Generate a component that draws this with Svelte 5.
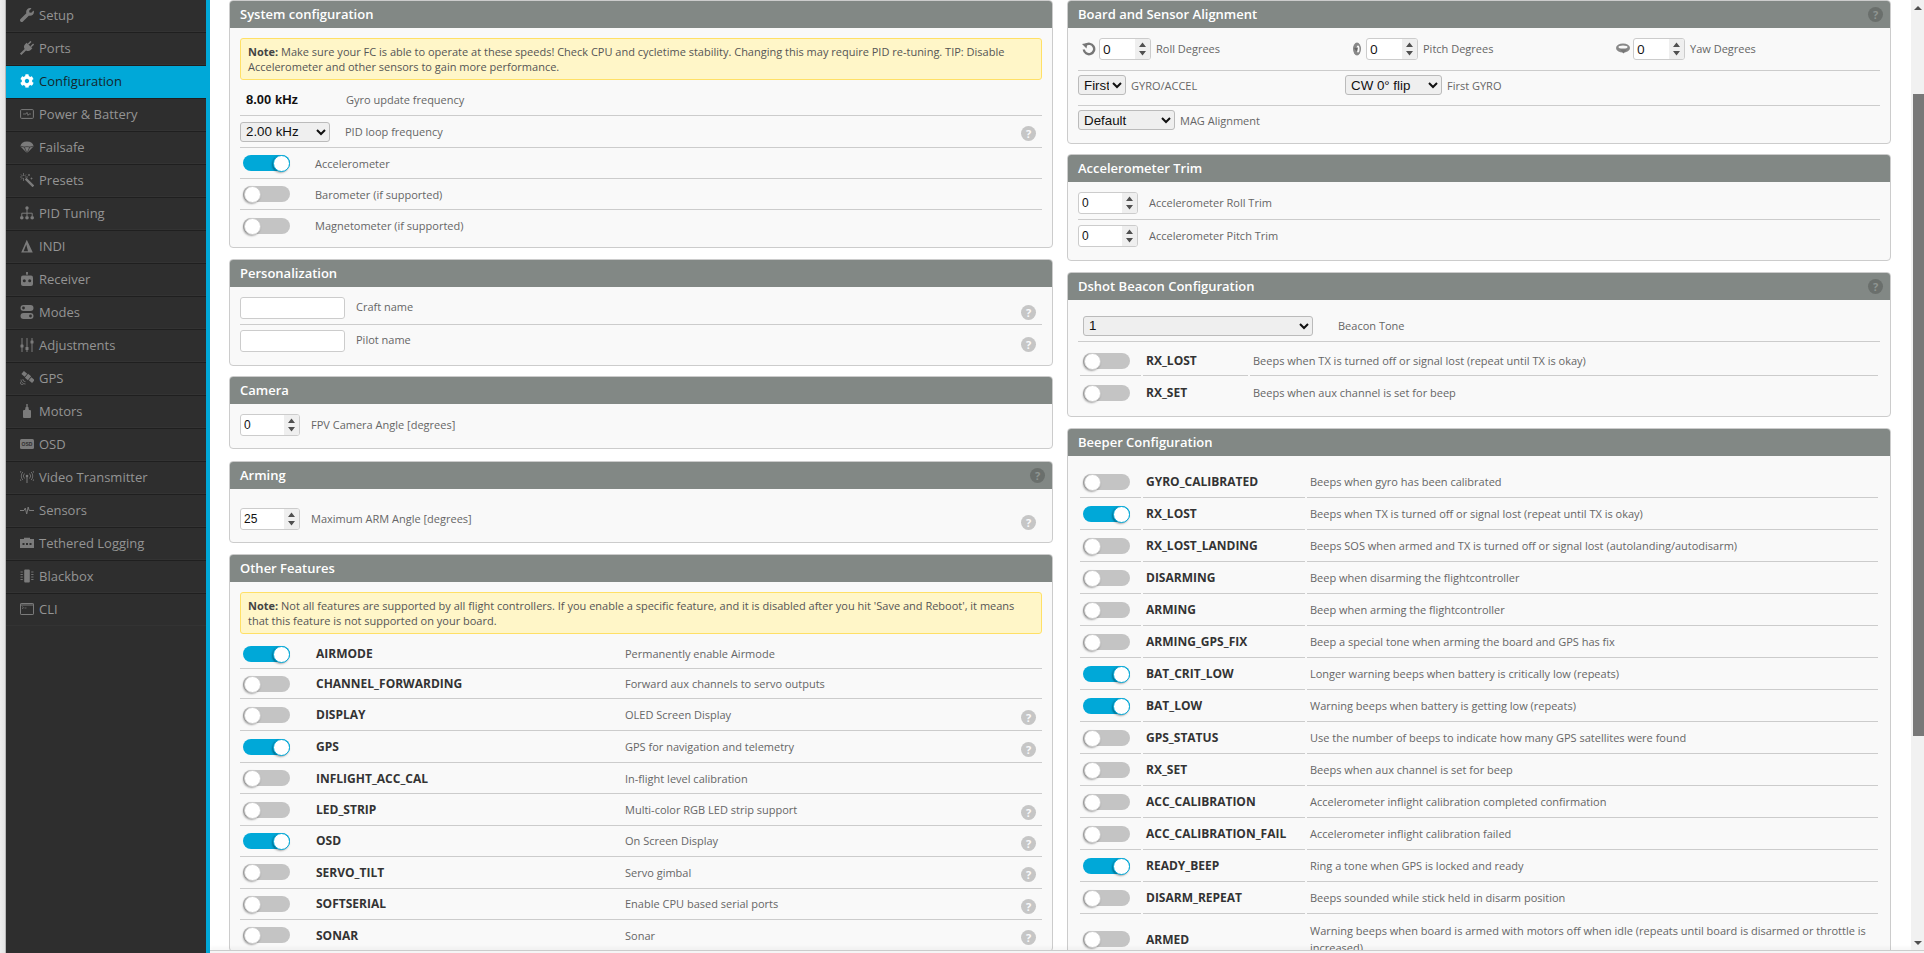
<script>
  const wrench = 'M507.73 109.1c-2.24-9.03-13.54-12.09-20.12-5.51l-74.36 74.36-67.88-11.31-11.31-67.88 74.36-74.36c6.62-6.62 3.43-17.9-5.66-20.16-47.38-11.74-99.55.91-136.58 37.93-39.64 39.64-50.55 97.1-34.05 147.2L18.74 402.76c-24.99 24.99-24.99 65.51 0 90.5 24.99 24.99 65.51 24.99 90.5 0l213.21-213.21c50.12 16.71 107.47 5.68 147.37-34.22 37.07-37.07 49.7-89.32 37.91-136.73z';
  const cog = 'M487.4 315.7l-42.6-24.6c4.3-23.2 4.3-47 0-70.2l42.6-24.6c4.9-2.8 7.1-8.6 5.5-14-11.1-35.6-30-67.8-54.7-94.6-3.8-4.1-10-5.1-14.8-2.3L380.8 110c-17.9-15.4-38.5-27.3-60.8-35.1V25.8c0-5.6-3.9-10.5-9.4-11.7-36.7-8.2-74.3-7.8-109.2 0-5.5 1.2-9.4 6.1-9.4 11.7V75c-22.2 7.9-42.8 19.8-60.8 35.1L88.7 85.5c-4.9-2.8-11-1.9-14.8 2.3-24.7 26.7-43.6 58.9-54.7 94.6-1.7 5.4.6 11.2 5.5 14L67.3 221c-4.3 23.2-4.3 47 0 70.2l-42.6 24.6c-4.9 2.8-7.1 8.6-5.5 14 11.1 35.6 30 67.8 54.7 94.6 3.8 4.1 10 5.1 14.8 2.3l42.6-24.6c17.9 15.4 38.5 27.3 60.8 35.1v49.2c0 5.6 3.9 10.5 9.4 11.7 36.7 8.2 74.3 7.8 109.2 0 5.5-1.2 9.4-6.1 9.4-11.7v-49.2c22.2-7.9 42.8-19.8 60.8-35.1l42.6 24.6c4.9 2.8 11 1.9 14.8-2.3 24.7-26.7 43.6-58.9 54.7-94.6 1.5-5.5-.7-11.3-5.6-14.1zM256 336c-44.1 0-80-35.9-80-80s35.9-80 80-80 80 35.9 80 80-35.9 80-80 80z';

  const nav = [
    { label: 'Setup', icon: `<g transform="scale(.0273)"><path d="${wrench}"/></g>` },
    { label: 'Ports', icon: `<g transform="rotate(45 7 7)"><rect x="4.4" y="-.5" width="1.5" height="4"/><rect x="8.1" y="-.5" width="1.5" height="4"/><path d="M3 3.5h8v2.2a4 4 0 0 1-3 3.7V16H6V9.4a4 4 0 0 1-3-3.7z"/></g>` },
    { label: 'Configuration', active: true, icon: `<g transform="scale(.0273)"><path d="${cog}"/></g>` },
    { label: 'Power & Battery', icon: `<rect x=".6" y="2.6" width="12.8" height="8.8" rx="1" fill="none" stroke="currentColor" stroke-width="1"/><path d="M3 7h3l1-1.6 1 3 1-1.4h2" fill="none" stroke="currentColor" stroke-width=".8"/>` },
    { label: 'Failsafe', icon: `<path d="M.3 6.2A6.8 5.8 0 0 1 13.700 6.2L7 13.2z"/><path d="M.3 6.2 4.200 7 7 13.2 9.800 7 13.700 6.2M4.200 7 7 6.600 9.800 7" fill="none" stroke="#2e2e2e" stroke-width=".7"/>` },
    { label: 'Presets', icon: `<path d="M5.600 5.600 13.400 13.400" stroke="currentColor" stroke-width="2.400"/><path d="M3.500 0v3M3.500 5v3M0 4h2.500M5 4h3M1 1.500l1.500 1.500M6 1.500 4.500 3M1 6.500 2.500 5M9 1v2M8 2h2M10.500 5.500h2M11.500 4.500v2" stroke="currentColor" stroke-width=".7" fill="none"/>` },
    { label: 'PID Tuning', icon: `<circle cx="7" cy="2" r="1.700"/><circle cx="1.800" cy="11.800" r="1.800"/><circle cx="7" cy="11.800" r="1.800"/><circle cx="12.200" cy="11.800" r="1.800"/><path d="M7 3v7M1.800 10V7.200h10.400V10" fill="none" stroke="currentColor" stroke-width="1"/>` },
    { label: 'INDI', icon: `<path fill-rule="evenodd" d="M6.800.8 12.800 13.600H1.200zM6.300 5.500 3.600 12.300h4.400z"/>` },
    { label: 'Receiver', icon: `<rect x="6.400" y="0" width="1.200" height="3"/><circle cx="7" cy="1" r="1"/><rect x="1" y="3.500" width="12" height="10.500" rx="2"/><circle cx="4.300" cy="8.700" r="1.500" fill="#2e2e2e"/><circle cx="9.700" cy="8.700" r="1.500" fill="#2e2e2e"/>` },
    { label: 'Modes', icon: `<path fill-rule="evenodd" d="M3.500 0h7a3 3 0 0 1 0 6h-7a3 3 0 0 1 0-6zM3.500 1.600a1.400 1.400 0 1 0 0 2.800 1.400 1.400 0 0 0 0-2.800zM3.500 8h7a3 3 0 0 1 0 6h-7a3 3 0 0 1 0-6zM10.500 9.600a1.400 1.400 0 1 0 0 2.800 1.400 1.400 0 0 0 0-2.800z"/>` },
    { label: 'Adjustments', icon: `<path d="M2 0v14M7 0v14M12 0v14" stroke="currentColor" stroke-width="1"/><rect x=".5" y="6.500" width="3" height="3" rx=".6"/><rect x="5.500" y="9" width="3" height="3" rx=".6"/><rect x="10.500" y="2.500" width="3" height="3" rx=".6"/>` },
    { label: 'GPS', icon: `<g transform="rotate(40 8 6)"><rect x="6" y="3.500" width="4" height="5"/><rect x="1" y="4" width="4.300" height="4"/><rect x="10.700" y="4" width="4.300" height="4"/></g><path d="M1 8.500a4.500 4.500 0 0 0 4.500 4.500M0 10.500a3.500 3.500 0 0 0 3.500 3.500M2.800 8a2.700 2.700 0 0 0 2.700 2.700" fill="none" stroke="currentColor" stroke-width=".8"/>` },
    { label: 'Motors', icon: `<rect x="6.300" y="0" width="1.400" height="3"/><path d="M5.600 3h2.800l.6 3.200H5z"/><rect x="3" y="6" width="8" height="8" rx="1"/>` },
    { label: 'OSD', icon: `<rect x="0" y="2" width="14" height="10" rx="1.500"/><text x="7" y="9" text-anchor="middle" font-size="5" font-weight="700" font-family="Liberation Sans, sans-serif" fill="#2e2e2e">OSD</text>` },
    { label: 'Video Transmitter', icon: `<circle cx="7" cy="6" r="1.300"/><path d="M7 6v7" stroke="currentColor" stroke-width="1"/><path d="M4.500 3.500a3.500 3.500 0 0 0 0 5M9.500 3.500a3.500 3.500 0 0 1 0 5M2.800 2a6 6 0 0 0 0 8M11.200 2a6 6 0 0 1 0 8M1 1a8 8 0 0 0 0 10M13 1a8 8 0 0 1 0 10" fill="none" stroke="currentColor" stroke-width=".8"/>` },
    { label: 'Sensors', icon: `<path d="M0 7.500h4l1.300-2.500 1.400 6 1.500-7 1 3.500h4.800" fill="none" stroke="currentColor" stroke-width="1"/>` },
    { label: 'Tethered Logging', icon: `<path fill-rule="evenodd" d="M0 3h4V1.800h6V3h4v9H0zM2.500 7v2h2V7zM6 7v2h2V7zM9.500 7v2h2V7z"/>` },
    { label: 'Blackbox', icon: `<rect x="4.200" y=".5" width="5.600" height="13" rx="1"/><path d="M.5 3h2.300M.5 5.500h2.300M.5 8h2.300M.5 10.500h2.300M11.200 3h2.300M11.200 5.500h2.300M11.200 8h2.300M11.200 10.500h2.300" stroke="currentColor" stroke-width=".9"/>` },
    { label: 'CLI', icon: `<rect x=".5" y="1.500" width="13" height="11" rx=".6" fill="none" stroke="currentColor" stroke-width="1"/><path d="M.5 3h13" stroke="currentColor" stroke-width="1"/><path d="M2 4.500 3.500 5.700 2 6.900M4.500 6h2" fill="none" stroke="currentColor" stroke-width=".7"/>` }
  ];

  const features = [
    { name: 'AIRMODE', desc: 'Permanently enable Airmode', on: true },
    { name: 'CHANNEL_FORWARDING', desc: 'Forward aux channels to servo outputs' },
    { name: 'DISPLAY', desc: 'OLED Screen Display', help: true },
    { name: 'GPS', desc: 'GPS for navigation and telemetry', on: true, help: true },
    { name: 'INFLIGHT_ACC_CAL', desc: 'In-flight level calibration' },
    { name: 'LED_STRIP', desc: 'Multi-color RGB LED strip support', help: true },
    { name: 'OSD', desc: 'On Screen Display', on: true, help: true },
    { name: 'SERVO_TILT', desc: 'Servo gimbal', help: true },
    { name: 'SOFTSERIAL', desc: 'Enable CPU based serial ports', help: true },
    { name: 'SONAR', desc: 'Sonar', help: true }
  ];

  const dshot = [
    { name: 'RX_LOST', desc: 'Beeps when TX is turned off or signal lost (repeat until TX is okay)' },
    { name: 'RX_SET', desc: 'Beeps when aux channel is set for beep' }
  ];

  const beeper = [
    { name: 'GYRO_CALIBRATED', desc: 'Beeps when gyro has been calibrated' },
    { name: 'RX_LOST', desc: 'Beeps when TX is turned off or signal lost (repeat until TX is okay)', on: true },
    { name: 'RX_LOST_LANDING', desc: 'Beeps SOS when armed and TX is turned off or signal lost (autolanding/autodisarm)' },
    { name: 'DISARMING', desc: 'Beep when disarming the flightcontroller' },
    { name: 'ARMING', desc: 'Beep when arming the flightcontroller' },
    { name: 'ARMING_GPS_FIX', desc: 'Beep a special tone when arming the board and GPS has fix' },
    { name: 'BAT_CRIT_LOW', desc: 'Longer warning beeps when battery is critically low (repeats)', on: true },
    { name: 'BAT_LOW', desc: 'Warning beeps when battery is getting low (repeats)', on: true },
    { name: 'GPS_STATUS', desc: 'Use the number of beeps to indicate how many GPS satellites were found' },
    { name: 'RX_SET', desc: 'Beeps when aux channel is set for beep' },
    { name: 'ACC_CALIBRATION', desc: 'Accelerometer inflight calibration completed confirmation' },
    { name: 'ACC_CALIBRATION_FAIL', desc: 'Accelerometer inflight calibration failed' },
    { name: 'READY_BEEP', desc: 'Ring a tone when GPS is locked and ready', on: true },
    { name: 'DISARM_REPEAT', desc: 'Beeps sounded while stick held in disarm position' },
    { name: 'ARMED', desc: 'Warning beeps when board is armed with motors off when idle (repeats until board is disarmed or throttle is increased)' }
  ];
</script>

{#snippet toggle(on)}
  <span class="toggle" class:on><span class="knob"></span></span>
{/snippet}

{#snippet help(cls)}
  <span class="help {cls}">?</span>
{/snippet}

<div class="page">
  <div class="edge"></div>
  <nav class="sidebar">
    {#each nav as item}
      <div class="nav-item" class:active={item.active}>
        <svg class="nav-icon" viewBox="0 0 14 14" width="14" height="14" fill="currentColor">{@html item.icon}</svg>
        <span>{item.label}</span>
      </div>
    {/each}
  </nav>
  <div class="stripe"></div>

  <div class="right">
    <div class="scroller">
      <main class="columns">
        <div class="col">
          <section class="panel sys">
            <h3>System configuration</h3>
            <div class="body">
              <div class="note"><b>Note:</b> Make sure your FC is able to operate at these speeds! Check CPU and cycletime stability. Changing this may require PID re-tuning. TIP: Disable Accelerometer and other sensors to gain more performance.</div>
              <div class="row gyro"><strong class="rate">8.00 kHz</strong><span>Gyro update frequency</span></div>
              <div class="row pid">
                <select class="sel-pid"><option>2.00 kHz</option></select>
                <span>PID loop frequency</span>
                {@render help('row-help')}
              </div>
              <div class="row h31">{@render toggle(true)}<span>Accelerometer</span></div>
              <div class="row h31">{@render toggle(false)}<span>Barometer (if supported)</span></div>
              <div class="row h31 last">{@render toggle(false)}<span>Magnetometer (if supported)</span></div>
            </div>
          </section>

          <section class="panel person">
            <h3>Personalization</h3>
            <div class="body">
              <div class="row name-row first">
                <input class="text-in" type="text" />
                <span>Craft name</span>
                {@render help('row-help')}
              </div>
              <div class="row name-row last">
                <input class="text-in" type="text" />
                <span>Pilot name</span>
                {@render help('row-help')}
              </div>
            </div>
          </section>

          <section class="panel camera">
            <h3>Camera</h3>
            <div class="body">
              <div class="row num-row last">
                <input class="num wide" type="number" value="0" />
                <span>FPV Camera Angle [degrees]</span>
              </div>
            </div>
          </section>

          <section class="panel arming">
            <h3>Arming{@render help('head-help')}</h3>
            <div class="body">
              <div class="row num-row last">
                <input class="num wide" type="number" value="25" />
                <span>Maximum ARM Angle [degrees]</span>
                {@render help('row-help')}
              </div>
            </div>
          </section>

          <section class="panel other">
            <h3>Other Features</h3>
            <div class="body">
              <div class="note"><b>Note:</b> Not all features are supported by all flight controllers. If you enable a specific feature, and it is disabled after you hit 'Save and Reboot', it means that this feature is not supported on your board.</div>
              <div class="feature-list">
                {#each features as f}
                  <div class="row feature">
                    {@render toggle(f.on)}
                    <b class="fname">{f.name}</b>
                    <span>{f.desc}</span>
                    {#if f.help}{@render help('row-help')}{/if}
                  </div>
                {/each}
              </div>
            </div>
          </section>
        </div>

        <div class="col">
          <section class="panel board">
            <h3>Board and Sensor Alignment{@render help('head-help')}</h3>
            <div class="body">
              <div class="row degrees">
                <div class="deg">
                  <svg class="deg-icon" viewBox="0 0 14 14" width="14" height="14"><path d="M3.400 3.200A5.200 5.200 0 1 1 1.800 7.500" fill="none" stroke="#777" stroke-width="2.400"/><path d="M0 2 5.500 1 4.500 6.500z" fill="#777"/></svg>
                  <input class="num big" type="number" value="0" />
                  <span>Roll Degrees</span>
                </div>
                <div class="deg">
                  <svg class="deg-icon" viewBox="0 0 14 14" width="14" height="14"><ellipse cx="9" cy="7" rx="4" ry="6.500" fill="#888"/><ellipse cx="10" cy="7" rx="1.500" ry="3.500" fill="#f9f9f9"/><path d="M6 6 10 5.500 9 10z" fill="#666"/></svg>
                  <input class="num big" type="number" value="0" />
                  <span>Pitch Degrees</span>
                </div>
                <div class="deg">
                  <svg class="deg-icon" viewBox="0 0 14 14" width="14" height="14"><ellipse cx="7" cy="6" rx="7" ry="4.500" fill="#888"/><ellipse cx="7" cy="5" rx="4.500" ry="1.500" fill="#f9f9f9"/><path d="M4 7.500h7L7.500 11.500z" fill="#777"/></svg>
                  <input class="num big" type="number" value="0" />
                  <span>Yaw Degrees</span>
                </div>
              </div>
              <div class="row align-row">
                <div class="half">
                  <select class="sel-first"><option>First</option></select>
                  <span>GYRO/ACCEL</span>
                </div>
                <div class="half">
                  <select class="sel-flip"><option>CW 0° flip</option></select>
                  <span>First GYRO</span>
                </div>
              </div>
              <div class="row align-row last">
                <select class="sel-flip"><option>Default</option></select>
                <span>MAG Alignment</span>
              </div>
            </div>
          </section>

          <section class="panel trim">
            <h3>Accelerometer Trim</h3>
            <div class="body">
              <div class="row trim-row first">
                <input class="num wide" type="number" value="0" />
                <span>Accelerometer Roll Trim</span>
              </div>
              <div class="row trim-row last">
                <input class="num wide" type="number" value="0" />
                <span>Accelerometer Pitch Trim</span>
              </div>
            </div>
          </section>

          <section class="panel dshot">
            <h3>Dshot Beacon Configuration{@render help('head-help')}</h3>
            <div class="body">
              <div class="row tone">
                <select class="sel-tone"><option>1</option></select>
                <span>Beacon Tone</span>
              </div>
              <table class="beeps short">
                <tbody>
                  {#each dshot as b}
                    <tr>
                      <td class="c-toggle">{@render toggle(b.on)}</td>
                      <td class="c-name">{b.name}</td>
                      <td>{b.desc}</td>
                    </tr>
                  {/each}
                </tbody>
              </table>
            </div>
          </section>

          <section class="panel beeper">
            <h3>Beeper Configuration</h3>
            <div class="body">
              <table class="beeps long">
                <tbody>
                  {#each beeper as b}
                    <tr>
                      <td class="c-toggle">{@render toggle(b.on)}</td>
                      <td class="c-name">{b.name}</td>
                      <td>{b.desc}</td>
                    </tr>
                  {/each}
                </tbody>
              </table>
            </div>
          </section>
        </div>
      </main>

      <div class="scrollbar">
        <span class="arrow up"></span>
        <div class="thumb"></div>
        <span class="arrow down"></span>
      </div>
    </div>
    <div class="foot"></div>
  </div>
</div>

<style>
  :global(body) {
    margin: 0;
    overflow: hidden;
    background: #fff;
  }

  .page {
    display: flex;
    height: 953px;
    overflow: hidden;
    font-family: "Open Sans", sans-serif;
    font-size: 11px;
    color: #666;
  }

  .edge {
    width: 6px;
    flex: none;
    background: linear-gradient(to right, #eee, #e4e4e4 80%, #999);
  }

  .sidebar {
    width: 200px;
    flex: none;
    background: #2e2e2e;
  }

  .stripe {
    width: 4px;
    flex: none;
    background: #00a8d8;
  }

  .nav-item {
    display: flex;
    align-items: center;
    gap: 5.500px;
    height: 30px;
    padding: 0 0 2px 13.500px;
    border-bottom: 1px solid #1f1f1f;
    box-shadow: inset 0 -1px 0 #333;
    font-size: 13px;
    color: #949494;
  }

  .nav-item:last-child {
    border-bottom: none;
  }

  .nav-item.active {
    background: #00a8d8;
    color: #14262c;
    box-shadow: none;
  }

  .nav-icon {
    flex: none;
    color: #7b7b7b;
  }

  .active .nav-icon {
    color: #fff;
  }

  .right {
    flex: 1;
    min-width: 0;
    display: flex;
    flex-direction: column;
  }

  .scroller {
    flex: 1;
    min-height: 0;
    display: flex;
    overflow: hidden;
  }

  .columns {
    flex: 1;
    min-width: 0;
    display: grid;
    grid-template-columns: 1fr 1fr;
    gap: 14px;
    padding: 0 20px 0 19px;
    align-items: start;
  }

  .col {
    min-width: 0;
  }

  .panel {
    border: 1px solid #ccc;
    border-radius: 4px;
    background: #f9f9f9;
    margin-bottom: 11px;
    overflow: hidden;
  }

  h3 {
    position: relative;
    margin: 0;
    height: 27px;
    line-height: 26px;
    padding-left: 10px;
    background: #828885;
    color: #fff;
    font-size: 13px;
    font-weight: 600;
  }

  .body {
    padding: 10px 10px 6px;
  }

  .note {
    box-sizing: border-box;
    height: 42px;
    padding: 5px 7px;
    background: #fff6c8;
    border: 1px solid #ffe066;
    border-radius: 3px;
    line-height: 15px;
    color: #555;
  }

  .note b {
    color: #444;
  }

  .row {
    position: relative;
    display: flex;
    align-items: center;
    box-sizing: border-box;
    border-bottom: 1px solid #ccc;
  }

  .row.last {
    border-bottom: none;
  }

  .gyro {
    height: 36px;
    padding-top: 4px;
  }

  .rate {
    width: 100px;
    margin-left: 6px;
    font-family: "Liberation Sans", sans-serif;
    font-size: 13px;
    color: #111;
  }

  .pid {
    height: 32px;
  }

  .pid span {
    margin: -1px 0 0 15px;
  }

  select {
    box-sizing: border-box;
    height: 20px;
    padding: 0 0 0 1px;
    background-color: #efefef;
    border: 1px solid #bbb;
    border-radius: 3px;
    font-family: "Liberation Sans", sans-serif;
    font-size: 13.333px;
    color: #111;
  }

  .sel-pid {
    width: 90px;
  }

  .h31 {
    height: 31px;
  }

  .h31 .toggle {
    margin-right: 25px;
  }

  .toggle {
    position: relative;
    display: block;
    flex: none;
    width: 47px;
    height: 16px;
    margin-left: 3px;
    border-radius: 8px;
    background: #c4c4c4;
  }

  .toggle.on {
    background: #00a8d8;
  }

  .knob {
    position: absolute;
    left: 1px;
    top: 0;
    width: 15px;
    height: 15px;
    border-radius: 50%;
    background: #fff;
    border: 0.500px solid #ccc;
    box-shadow: -1px 1px 2px rgba(0, 0, 0, 0.35);
  }

  .on .knob {
    left: auto;
    right: 0;
    border-color: #00a8d8;
  }

  .help {
    position: absolute;
    width: 15px;
    height: 15px;
    border-radius: 50%;
    text-align: center;
    line-height: 15px;
    font-size: 11px;
    font-weight: 700;
    color: #f9f9f9;
    background: #c6c6c6;
  }

  .row-help {
    right: 6px;
    top: calc(50% - 5px);
  }

  .head-help {
    right: 7px;
    top: 6px;
    background: #6a6f6c;
    color: #8f9592;
  }

  .person {
    margin-bottom: 10px;
  }

  .person .body {
    padding-bottom: 13px;
  }

  .name-row {
    align-items: flex-start;
  }

  .name-row span {
    margin: 2px 0 0 11px;
  }

  .name-row.first {
    height: 28px;
  }

  .name-row.last {
    height: 27px;
    padding-top: 5px;
  }

  .name-row.first .row-help {
    top: 6px;
  }

  .name-row.last .row-help {
    top: 10px;
  }

  .text-in {
    box-sizing: border-box;
    width: 105px;
    height: 22px;
    background: #fff;
    border: 1px solid #ccc;
    border-radius: 3px;
  }

  .num {
    box-sizing: border-box;
    height: 22px;
    padding: 0 0 0 3px;
    background: #fff;
    border: 1px solid #ccc;
    border-radius: 3px;
    font-family: "Liberation Sans", sans-serif;
    font-size: 12px;
    color: #111;
  }

  .num::-webkit-inner-spin-button {
    -webkit-appearance: none;
    appearance: none;
    opacity: 1;
    width: 15px;
    height: 20px;
    margin: 0;
    background: #efefef url("data:image/svg+xml,%3Csvg xmlns='http://www.w3.org/2000/svg' width='15' height='20'%3E%3Cpath d='M7.500 3.500 11 8H4zM7.500 16.500 11 12H4z' fill='%23505050'/%3E%3C/svg%3E") no-repeat center;
  }

  .wide {
    width: 60px;
  }

  .big {
    width: 52px;
    font-family: "Open Sans", sans-serif;
    font-size: 13.500px;
  }

  .num-row {
    height: 22px;
  }

  .num-row span {
    margin: -2px 0 0 11px;
  }

  .num-row .row-help {
    top: 7px;
    margin: 0;
  }

  .camera {
    margin-bottom: 12px;
  }

  .camera .body {
    padding-bottom: 12px;
  }

  .arming .body {
    padding: 19px 10px 12px;
  }

  .other .body {
    padding-bottom: 0;
  }

  .feature {
    height: 31.400px;
  }

  .feature:nth-child(1) {
    height: 35px;
    padding-top: 5px;
  }

  .feature:nth-child(2) {
    height: 30px;
  }

  .feature:nth-child(3),
  .feature:nth-child(4) {
    height: 32px;
  }

  .fname {
    width: 309px;
    flex: none;
    margin-left: 26px;
    font-size: 12px;
    color: #333;
  }

  .degrees {
    box-sizing: content-box;
    height: 22px;
    padding-bottom: 10px;
  }

  .deg {
    width: 267px;
    display: flex;
    align-items: center;
  }

  .deg-icon {
    flex: none;
    margin: 0 3px 0 4px;
  }

  .deg:nth-child(2) .deg-icon {
    margin-left: 0;
    margin-right: 7px;
    transform: translateX(3px);
  }

  .deg:nth-child(3) .deg-icon {
    margin-left: 4px;
    margin-right: 3px;
  }

  .deg span {
    margin: -2px 0 0 5px;
  }

  .align-row {
    height: 35px;
    padding: 4px 0 10px;
  }

  .align-row.last {
    padding-bottom: 11px;
  }

  .align-row span {
    margin-left: 5px;
  }

  .half {
    width: 267px;
    display: flex;
    align-items: center;
  }

  .sel-first {
    width: 48px;
  }

  .sel-flip {
    width: 97px;
  }

  .board {
    margin-bottom: 10px;
  }

  .board .body {
    padding-bottom: 2px;
  }

  .trim-row {
    height: 22px;
  }

  .trim-row span {
    margin: -2px 0 0 11px;
  }

  .trim-row.first {
    box-sizing: content-box;
    padding-bottom: 5px;
  }

  .trim-row.last {
    box-sizing: content-box;
    padding-top: 5px;
  }

  .trim .body {
    padding-bottom: 13px;
  }

  .tone {
    height: 32px;
  }

  .sel-tone {
    width: 230px;
    margin-left: 5px;
  }

  .tone span {
    margin-left: 25px;
  }

  .dshot .body {
    padding-bottom: 8px;
  }

  .beeps {
    width: 100%;
    border-collapse: separate;
    border-spacing: 2px 0;
    table-layout: fixed;
  }

  .beeps td {
    height: 31px;
    padding: 0 3px;
    border-bottom: 1px solid #ccc;
    line-height: 17px;
  }

  .beeps tr:last-child td {
    border-bottom: none;
  }

  .short tr:first-child td {
    height: 29px;
    padding-top: 4px;
  }

  .short tr:last-child td {
    padding-top: 1px;
  }

  .long tr:last-child td {
    padding-top: 8px;
  }

  .c-toggle {
    width: 61px;
    box-sizing: border-box;
    padding-left: 0 !important;
    padding-right: 0 !important;
  }

  .c-name {
    font-size: 12px;
    font-weight: 700;
    color: #333;
  }

  .short .c-name {
    width: 99px;
  }

  .long .c-name {
    width: 156px;
  }

  .scrollbar {
    position: relative;
    width: 13px;
    flex: none;
    background: #f1f1f1;
  }

  .thumb {
    position: absolute;
    left: 2px;
    right: 0;
    top: 94px;
    height: 642px;
    background: #787878;
  }

  .arrow {
    position: absolute;
    left: 3px;
    width: 0;
    height: 0;
    border-left: 4px solid transparent;
    border-right: 4px solid transparent;
  }

  .arrow.up {
    top: 6px;
    border-bottom: 4px solid #505050;
  }

  .arrow.down {
    bottom: 5px;
    border-top: 4px solid #505050;
  }

  .foot {
    height: 2px;
    flex: none;
    background: #f5f5f5;
    border-top: 1px solid #ccc;
    box-shadow: 0 -2px 4px rgba(0, 0, 0, 0.06);
  }
</style>
